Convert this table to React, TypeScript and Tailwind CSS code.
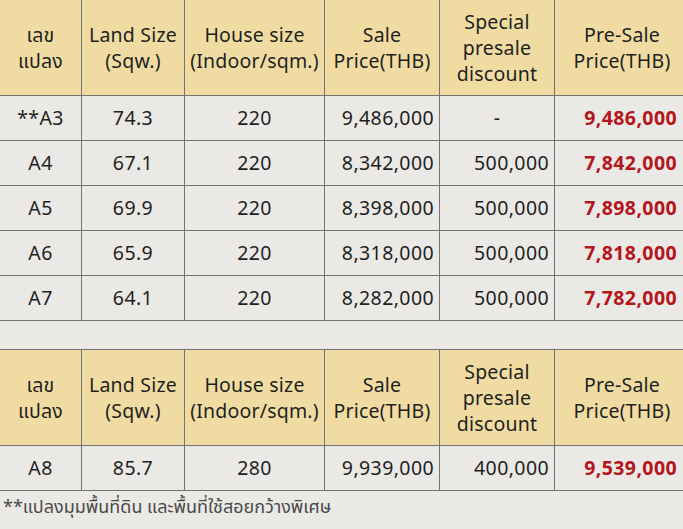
const rowsA = [
  { plot: "**A3", land: "74.3", house: "220", sale: "9,486,000", discount: "-", pre: "9,486,000" },
  { plot: "A4", land: "67.1", house: "220", sale: "8,342,000", discount: "500,000", pre: "7,842,000" },
  { plot: "A5", land: "69.9", house: "220", sale: "8,398,000", discount: "500,000", pre: "7,898,000" },
  { plot: "A6", land: "65.9", house: "220", sale: "8,318,000", discount: "500,000", pre: "7,818,000" },
  { plot: "A7", land: "64.1", house: "220", sale: "8,282,000", discount: "500,000", pre: "7,782,000" },
];

const rowsB = [
  { plot: "A8", land: "85.7", house: "280", sale: "9,939,000", discount: "400,000", pre: "9,539,000" },
];

type Row = (typeof rowsA)[number];

const th = "border-[1.5px] border-[#737373] bg-[#f0dca2] font-normal text-center align-middle leading-[26px] tracking-[0.2px]";
const td = "border-[1.5px] border-[#737373] h-[45px] align-middle tracking-[0.4px]";

function PriceTable({ rows }: { rows: Row[] }) {
  return (
    <table className="border-collapse table-fixed w-[690px] -ml-[1px] text-[19.5px] text-[#1f1f1f]">
      <colgroup>
        <col className="w-[82px]" />
        <col className="w-[103px]" />
        <col className="w-[140px]" />
        <col className="w-[115px]" />
        <col className="w-[115px]" />
        <col className="w-[135px]" />
      </colgroup>
      <thead>
        <tr className="h-[96px]">
          <th className={th}>เลข<br />แปลง</th>
          <th className={th}>Land Size<br />(Sqw.)</th>
          <th className={`${th} tracking-[-0.3px]`}>House size<br />(Indoor/sqm.)</th>
          <th className={th}>Sale<br />Price(THB)</th>
          <th className={th}>Special<br />presale<br />discount</th>
          <th className={th}>Pre-Sale<br />Price(THB)</th>
        </tr>
      </thead>
      <tbody>
        {rows.map((r) => (
          <tr key={r.plot}>
            <td className={`${td} text-center`}>{r.plot}</td>
            <td className={`${td} text-center`}>{r.land}</td>
            <td className={`${td} text-center`}>{r.house}</td>
            <td className={`${td} text-right pr-[5px]`}>{r.sale}</td>
            <td className={`${td} ${r.discount === "-" ? "text-center" : "text-right pr-[5px]"}`}>{r.discount}</td>
            <td className={`${td} text-right pr-[12px] font-bold text-[#b3161b]`}>{r.pre}</td>
          </tr>
        ))}
      </tbody>
    </table>
  );
}

export default function App() {
  return (
    <div
      className="w-[683px] h-[529px] overflow-hidden bg-[#ebe9e6]"
      style={{ fontFamily: "'Noto Sans', 'Noto Sans Thai', 'Noto Sans CJK SC', sans-serif" }}
    >
      <div className="-mt-[1px]">
        <PriceTable rows={rowsA} />
      </div>
      <div className="mt-[28px]">
        <PriceTable rows={rowsB} />
      </div>
      <p className="mt-[2px] pl-[3px] text-[18px] text-[#4a4a4a]">**แปลงมุมพื้นที่ดิน และพื้นที่ใช้สอยกว้างพิเศษ</p>
    </div>
  );
}
